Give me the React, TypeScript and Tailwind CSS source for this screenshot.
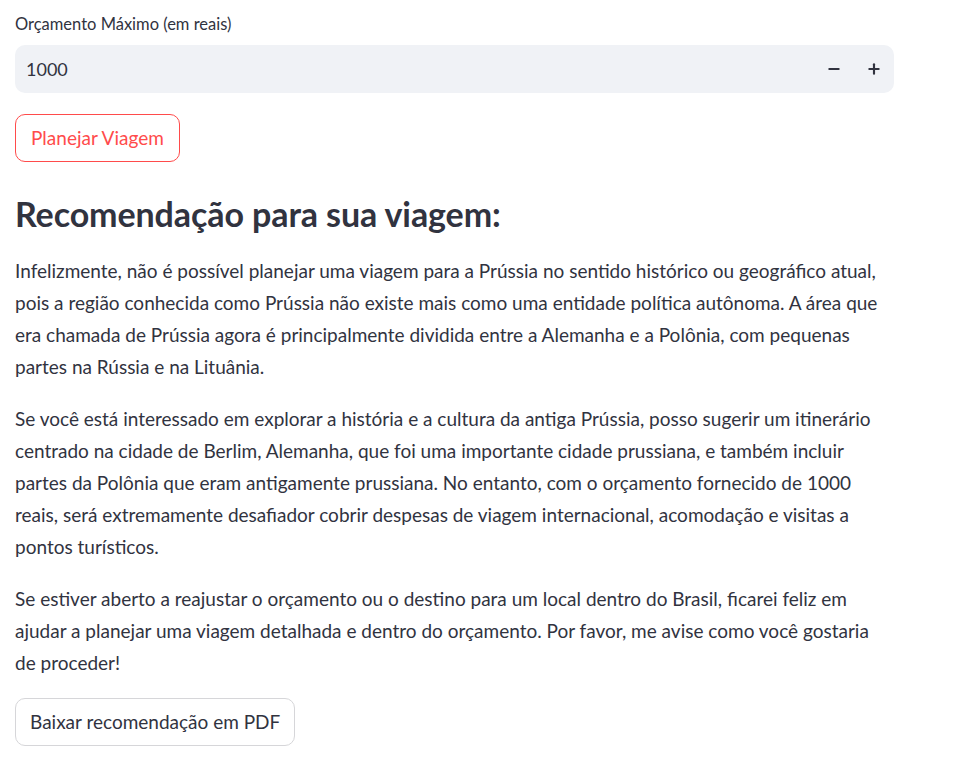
import { Minus, Plus } from "lucide-react";

const paragraphs = [
  "Infelizmente, não é possível planejar uma viagem para a Prússia no sentido histórico ou geográfico atual, pois a região conhecida como Prússia não existe mais como uma entidade política autônoma. A área que era chamada de Prússia agora é principalmente dividida entre a Alemanha e a Polônia, com pequenas partes na Rússia e na Lituânia.",
  "Se você está interessado em explorar a história e a cultura da antiga Prússia, posso sugerir um itinerário centrado na cidade de Berlim, Alemanha, que foi uma importante cidade prussiana, e também incluir partes da Polônia que eram antigamente prussiana. No entanto, com o orçamento fornecido de 1000 reais, será extremamente desafiador cobrir despesas de viagem internacional, acomodação e visitas a pontos turísticos.",
  "Se estiver aberto a reajustar o orçamento ou o destino para um local dentro do Brasil, ficarei feliz em ajudar a planejar uma viagem detalhada e dentro do orçamento. Por favor, me avise como você gostaria de proceder!",
];

export default function App() {
  return (
    <div className="min-h-screen bg-white text-[#31333f] font-['Lato','Noto_Sans',sans-serif]">
      <div className="w-[879px] ml-[15px] pt-[12px]">
        <label className="block text-[16.5px] leading-[24px] mb-[9px]">Orçamento Máximo (em reais)</label>
        <div className="flex items-center h-[48px] rounded-[10px] bg-[#f0f2f6]">
          <span className="flex-1 pl-[11px] text-[18px]">1000</span>
          <button className="w-[40px] h-full flex items-center justify-center">
            <Minus size={16} strokeWidth={3.2} />
          </button>
          <button className="w-[40px] h-full flex items-center justify-center mr-[0px]">
            <Plus size={16} strokeWidth={3.2} />
          </button>
        </div>
        <button className="mt-[21px] h-[48px] px-[15px] rounded-[10px] border border-[#ff4b4b] text-[#ff4b4b] text-[19px]">
          Planejar Viagem
        </button>
        <h3 className="mt-[32px] text-[34px] leading-[40px] font-bold tracking-[-0.1px]">Recomendação para sua viagem:</h3>
        <div className="mt-[21px] flex flex-col gap-[20px]">
          {paragraphs.map((p, i) => (
            <p key={i} className="text-[19px] leading-[32px] pr-[4px]">
              {p}
            </p>
          ))}
        </div>
        <button className="mt-[19px] h-[48px] px-[14px] rounded-[10px] border border-[#d6d6d9] text-[19px]">
          Baixar recomendação em PDF
        </button>
      </div>
    </div>
  );
}
